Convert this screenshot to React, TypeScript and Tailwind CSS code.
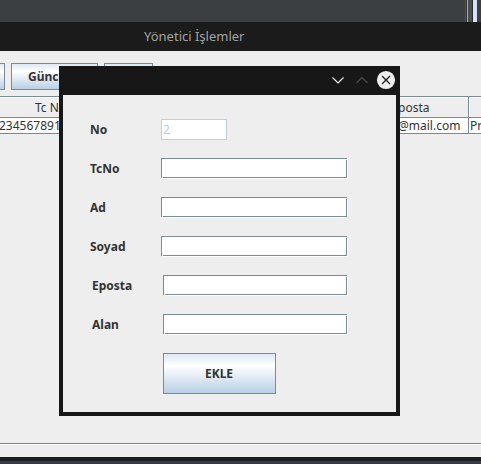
type FieldProps = { label: string; indented?: boolean };

function Field({ label, indented = false }: FieldProps) {
  return (
    <div className={`flex h-[21px] items-start ${indented ? "pl-[2px]" : ""}`}>
      <label className="w-[71px] shrink-0 font-bold leading-[21px]">{label}</label>
      <div
        className={`relative h-5 border border-[#7a8a99] bg-white shadow-[1px_1px_0_#fff] ${indented ? "w-[184px]" : "w-[186px]"}`}
      >
        <span className="absolute -right-px top-0 size-px bg-white" />
        <span className="absolute -bottom-px left-0 size-px bg-white" />
      </div>
    </div>
  );
}

const metal =
  "shrink-0 border border-[#7a8a99] bg-[linear-gradient(180deg,#dde8f3_0%,#ffffff_30%,#b8cfe5_100%)] font-bold";

function Dialog() {
  return (
    <section className="absolute left-[59px] top-[66px] flex h-[350px] w-[341px] flex-col bg-[#171717] px-1 pb-1">
      <header className="flex h-[29px] shrink-0 items-center justify-end">
        <svg width="72" height="29" viewBox="0 0 72 29" fill="none">
          <path d="M8.500 11.500 14 17l5.500-5.500" stroke="#f2f2f2" strokeWidth="1.2" />
          <path d="M32.500 17 38 11.500 43.500 17" stroke="#4e4e4e" strokeWidth="1.1" />
          <circle cx="62" cy="14" r="9.100" fill="#ededed" />
          <path d="m58 10 8 8m0-8-8 8" stroke="#171717" strokeWidth="1.2" />
        </svg>
      </header>
      <div className="flex flex-1 flex-col bg-[#eeeeee] pl-[27px] pt-6">
        <div className="mb-[18px] flex h-[21px]">
          <label className="w-[71px] shrink-0 font-bold leading-[21px]">No</label>
          <div className="w-[66px] border border-[#b8cfe5] bg-white pl-px leading-[20px] text-[#b8cfe5]">2</div>
        </div>
        <div className="flex flex-col gap-[18px]">
          <Field label="TcNo" />
          <Field label="Ad" />
          <Field label="Soyad" />
          <Field label="Eposta" indented />
          <Field label="Alan" indented />
        </div>
        <button className={`${metal} ml-[73px] mt-[18px] h-[41px] w-[113px] pr-px`}>EKLE</button>
      </div>
    </section>
  );
}

export default function App() {
  return (
    <main className="relative flex h-[464px] w-[481px] flex-col overflow-hidden bg-[#eeeeee] font-['Noto_Sans',sans-serif] text-[12px] text-[#333333]">
      <div className="flex h-[22px] shrink-0 justify-end bg-[#3c3f41]">
        <div className="w-px bg-[#555759]" />
        <div className="w-px bg-[#2f3032]" />
        <div className="w-px bg-[#eca52b]" />
        <div className="w-1 bg-[#4b4d4f]" />
        <div className="w-px bg-[#292b2c]" />
        <div className="w-1 bg-[#dcdcff]" />
        <div className="w-1 bg-[#3c3f41]" />
      </div>
      <header className="flex h-[29px] shrink-0 items-center bg-[#1b1b1b] pl-[144px] text-[13px] text-[#a0a4a6]">
        Yönetici İşlemler
      </header>
      <div className="flex h-[45px] shrink-0 gap-[6px] pt-3">
        <button className={`${metal} h-[27px] w-[5px] border-l-0`} />
        <button className={`${metal} h-[27px] w-[87px] pr-px`}>Güncelle</button>
        <button className={`${metal} h-[27px] w-[49px]`}>Sil</button>
      </div>
      <div className="shrink-0 border-t border-[#7a8a99]">
        <div className="flex h-[21px] border-b border-b-[#7a8a99] leading-[21px] shadow-[inset_0_1px_0_#fff]">
          <div className="w-[398px] shrink-0 pl-[35px]">Tc No</div>
          <div className="w-[71px] shrink-0 border-r border-[#7a8a99]">posta</div>
          <div className="flex-1 border-l border-white" />
        </div>
        <div className="flex h-4 border-b border-b-[#7a8a99] bg-white leading-[15px]">
          <div className="w-[398px] shrink-0">
            <span className="-ml-px">234567891</span>
          </div>
          <div className="w-[71px] shrink-0 border-r border-[#7a8a99]">@mail.com</div>
          <div className="shrink-0 pl-px">Pr</div>
        </div>
      </div>
      <div className="flex-1" />
      <footer className="flex h-[21px] shrink-0 flex-col border-t border-[#7a8a99]">
        <div className="h-[13px] border-t border-white" />
        <div className="h-1 bg-[#1d1f1e]" />
        <div className="h-[3px] bg-[#393c43]" />
      </footer>
      <Dialog />
    </main>
  );
}
